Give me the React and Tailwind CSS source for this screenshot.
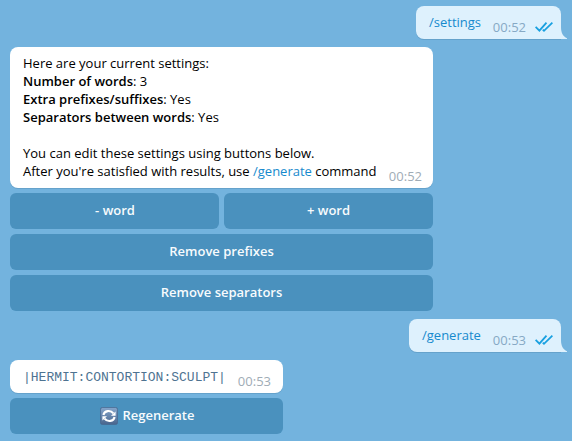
import React from "react";

function Checks() {
  return (
    <svg className="ml-[9px] h-[12px] w-[18px] shrink-0" viewBox="0 0 18 12" fill="none" stroke="#18a0e0" strokeWidth="1.8">
      <path d="M0.6 5.8 L4.4 9.7 L11.5 1.6" />
      <path d="M7.8 8.6 L9 9.8 L17.4 1.6" />
    </svg>
  );
}

function Outgoing({ text, time, width }) {
  return (
    <div className={`relative ml-auto mr-[11px] flex h-[33px] rounded-lg rounded-br-none bg-[#def1fd] pl-[13px] shadow-[0_1px_0_#65a2cb] ${width}`}>
      <span className="mt-[7px] leading-[18px] text-[#168acd]">{text}</span>
      <span className="ml-auto mr-[8px] mt-[12px] flex leading-[18px] text-[#86a9c5]">
        {time}
        <span className="mt-[3px]"><Checks /></span>
      </span>
      <svg className="absolute bottom-0 left-full h-[12px] w-[6px]" viewBox="0 0 6 12" fill="#def1fd">
        <path d="M0 0 C0 6 2 9.5 6 11.3 V12 H0 Z" />
      </svg>
    </div>
  );
}

function Button({ children, className = "" }) {
  return (
    <button className={`flex h-[36px] items-center justify-center rounded-md bg-[#4a91be] pb-[2px] font-semibold leading-[18px] text-[#f7fbfd] ${className}`}>
      {children}
    </button>
  );
}

function RefreshIcon() {
  return (
    <svg className="mr-[4px] mt-[2px] h-[18px] w-[18px]" viewBox="0 0 18 18">
      <defs>
        <linearGradient id="tile" x1="0" y1="0" x2="0" y2="1">
          <stop offset="0" stopColor="#86a6cc" />
          <stop offset="1" stopColor="#48658d" />
        </linearGradient>
      </defs>
      <rect x="0.4" y="0.4" width="17.2" height="17.2" rx="2.3" fill="url(#tile)" stroke="#47678e" strokeWidth="0.8" />
      <g fill="none" stroke="#fff" strokeWidth="2.1">
        <path d="M3.4 8 C4.2 3.6 10.4 2.6 13.4 6.4" />
        <path d="M14.6 10 C13.8 14.4 7.6 15.4 4.6 11.6" />
      </g>
      <path d="M15.6 4.4 V8.8 H11 Z M2.4 13.6 V9.2 H7 Z" fill="#fff" />
    </svg>
  );
}

export default function App() {
  return (
    <main className="flex h-[441px] w-[572px] flex-col overflow-hidden bg-[#73b3de] pt-[6px] font-['Open_Sans',sans-serif] text-[13px]">
      <Outgoing text="/settings" time="00:52" width="w-[145px]" />

      <section className="ml-[10px] mt-[8px] w-[423px]">
        <div className="flex h-[141px] rounded-lg bg-white pl-[13px] pt-[7px] leading-[18px] text-black shadow-[0_1px_0_#65a2cb]">
          <div className="whitespace-nowrap">
            <p>Here are your current settings:</p>
            <p><b className="font-semibold">Number of words</b>: 3</p>
            <p><b className="font-semibold">Extra prefixes/suffixes</b>: Yes</p>
            <p><b className="font-semibold">Separators between words</b>: Yes</p>
            <p className="mt-[18px]">You can edit these settings using buttons below.</p>
            <p>After you're satisfied with results, use <span className="text-[#168acd]">/generate</span> command</p>
          </div>
          <span className="ml-auto mr-[11px] mt-auto pb-[3px] text-[#a0acb6]">00:52</span>
        </div>
        <div className="mt-[5px] grid grid-cols-2 gap-[5px]">
          <Button className="pl-px">- word</Button>
          <Button>+ word</Button>
          <Button className="col-span-2">Remove prefixes</Button>
          <Button className="col-span-2">Remove separators</Button>
        </div>
      </section>

      <div className="mt-[8px]">
        <Outgoing text="/generate" time="00:53" width="w-[152px]" />
      </div>

      <section className="ml-[10px] mt-[8px] w-[273px]">
        <div className="flex h-[33px] rounded-lg bg-white pl-[13px] leading-[18px] shadow-[0_1px_0_#65a2cb]">
          <code className="mt-[9px] font-['Liberation_Mono',monospace] text-[13px] text-[#4e7391]">|HERMIT:CONTORTION:SCULPT|</code>
          <span className="ml-auto mr-[12px] mt-[12px] text-[#a0acb6]">00:53</span>
        </div>
        <Button className="mt-[5px] w-full pl-[2px]"><RefreshIcon />Regenerate</Button>
      </section>
    </main>
  );
}
